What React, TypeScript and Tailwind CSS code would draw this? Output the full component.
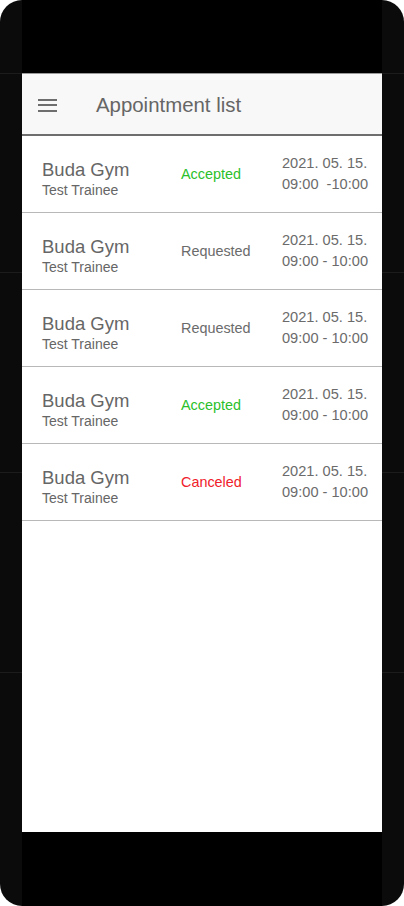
import React from 'react'

type Appointment = {
  gym: string
  trainee: string
  status: 'Accepted' | 'Requested' | 'Canceled'
  date: string
  time: string
}

const appointments: Appointment[] = [
  { gym: 'Buda Gym', trainee: 'Test Trainee', status: 'Accepted', date: '2021. 05. 15.', time: '09:00  -10:00' },
  { gym: 'Buda Gym', trainee: 'Test Trainee', status: 'Requested', date: '2021. 05. 15.', time: '09:00 - 10:00' },
  { gym: 'Buda Gym', trainee: 'Test Trainee', status: 'Requested', date: '2021. 05. 15.', time: '09:00 - 10:00' },
  { gym: 'Buda Gym', trainee: 'Test Trainee', status: 'Accepted', date: '2021. 05. 15.', time: '09:00 - 10:00' },
  { gym: 'Buda Gym', trainee: 'Test Trainee', status: 'Canceled', date: '2021. 05. 15.', time: '09:00 - 10:00' },
]

function statusColor(status: Appointment['status']) {
  if (status === 'Accepted') return 'text-[#2bbf2b]'
  if (status === 'Canceled') return 'text-[#f0202a]'
  return 'text-[#6b6b6b]'
}

function AppointmentRow({ item }: { item: Appointment }) {
  return (
    <div className="flex h-[77px] items-center border-b border-[#b8b8b8] pr-[14px] pl-5">
      <div className="w-[139px] pt-[9px]">
        <p className="text-[18.5px] leading-[22px] text-[#666]">{item.gym}</p>
        <p className="text-[14px] leading-[18px] text-[#666]">{item.trainee}</p>
      </div>
      <p className={`flex-1 pt-[1px] text-[14.4px] ${statusColor(item.status)}`}>{item.status}</p>
      <div className="pb-[1px] text-[14.6px] leading-[21px] whitespace-pre text-[#6b6b6b]">
        <p>{item.date}</p>
        <p>{item.time}</p>
      </div>
    </div>
  )
}

export default function App() {
  return (
    <div
      className="relative flex h-[906px] w-[404px] justify-center overflow-hidden rounded-[22px] bg-[#0b0b0b]"
      style={{ fontFamily: '"Liberation Sans", Arial, sans-serif' }}
    >
      {/* faint bezel lines */}
      <div className="absolute top-[73px] left-0 h-px w-full bg-[#1c1c1c]" />
      <div className="absolute top-[272px] left-0 h-px w-full bg-[#1c1c1c]" />
      <div className="absolute top-[472px] left-0 h-px w-full bg-[#1c1c1c]" />
      <div className="absolute top-[672px] left-0 h-px w-full bg-[#1c1c1c]" />

      <div className="relative flex w-[360px] flex-col bg-black">
        <div className="h-[73px]" />

        {/* Screen */}
        <div className="flex h-[759px] flex-col border-t border-[#9a9a9a] bg-white">
          <header className="flex h-[62px] items-center border-b-2 border-[#6e6e6e] bg-[#f8f8f8] pl-4">
            <div className="flex w-[19px] flex-col gap-[3.5px] pt-[2px]">
              <span className="h-[2px] w-full bg-[#6e6e6e]" />
              <span className="h-[2px] w-full bg-[#6e6e6e]" />
              <span className="h-[2px] w-full bg-[#6e6e6e]" />
            </div>
            <h1 className="ml-[39px] pt-[2px] text-[20.4px] text-[#666]">Appointment list</h1>
          </header>

          <div className="flex flex-col">
            {appointments.map((item, i) => (
              <AppointmentRow key={i} item={item} />
            ))}
          </div>
        </div>
      </div>
    </div>
  )
}
